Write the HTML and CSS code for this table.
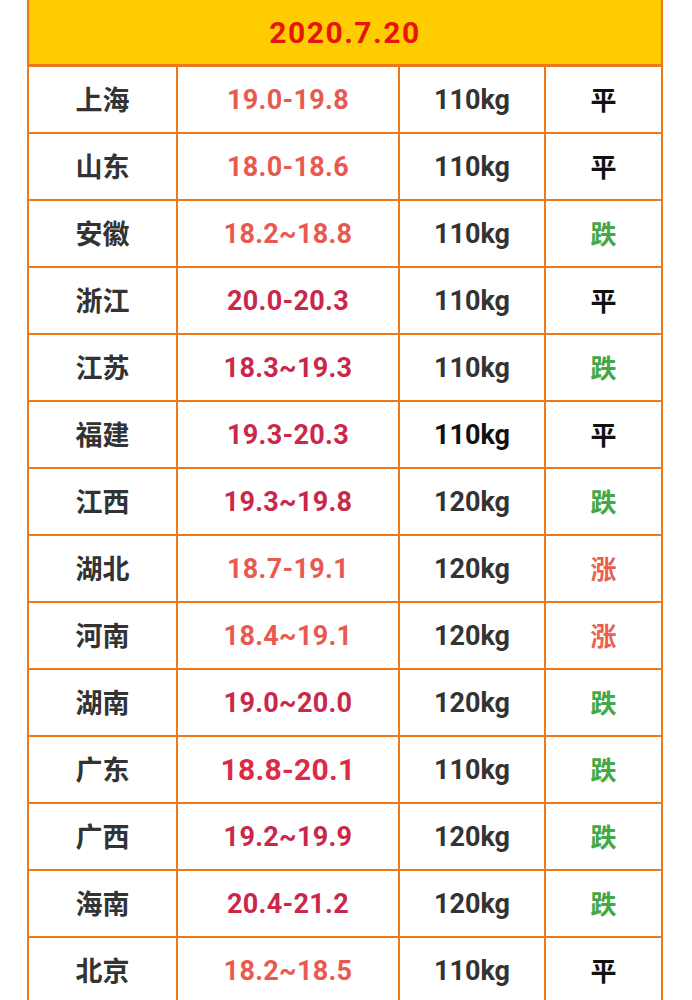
FILE: index.html
```html
<!DOCTYPE html>
<html lang="zh-CN">
<head>
<meta charset="utf-8">
<title>2020.7.20 生猪价格</title>
<link rel="stylesheet" href="styles.css">
</head>
<body>
<div class="price-table">
  <div class="head">2020.7.20</div>

  <div class="cell region">上海</div><div class="cell price coral">19.0-19.8</div><div class="cell weight">110kg</div><div class="cell trend flat">平</div>
  <div class="cell region">山东</div><div class="cell price coral">18.0-18.6</div><div class="cell weight">110kg</div><div class="cell trend flat">平</div>
  <div class="cell region">安徽</div><div class="cell price coral">18.2~18.8</div><div class="cell weight">110kg</div><div class="cell trend down">跌</div>
  <div class="cell region">浙江</div><div class="cell price crimson">20.0-20.3</div><div class="cell weight">110kg</div><div class="cell trend flat">平</div>
  <div class="cell region">江苏</div><div class="cell price crimson">18.3~19.3</div><div class="cell weight">110kg</div><div class="cell trend down">跌</div>
  <div class="cell region">福建</div><div class="cell price crimson">19.3-20.3</div><div class="cell weight dark">110kg</div><div class="cell trend flat">平</div>
  <div class="cell region">江西</div><div class="cell price crimson">19.3~19.8</div><div class="cell weight">120kg</div><div class="cell trend down">跌</div>
  <div class="cell region">湖北</div><div class="cell price coral">18.7-19.1</div><div class="cell weight">120kg</div><div class="cell trend up">涨</div>
  <div class="cell region">河南</div><div class="cell price coral">18.4~19.1</div><div class="cell weight">120kg</div><div class="cell trend up">涨</div>
  <div class="cell region">湖南</div><div class="cell price crimson">19.0~20.0</div><div class="cell weight">120kg</div><div class="cell trend down">跌</div>
  <div class="cell region">广东</div><div class="cell price red big">18.8-20.1</div><div class="cell weight">110kg</div><div class="cell trend down">跌</div>
  <div class="cell region">广西</div><div class="cell price crimson">19.2~19.9</div><div class="cell weight">120kg</div><div class="cell trend down">跌</div>
  <div class="cell region">海南</div><div class="cell price crimson">20.4-21.2</div><div class="cell weight">120kg</div><div class="cell trend down">跌</div>
  <div class="cell region">北京</div><div class="cell price coral">18.2~18.5</div><div class="cell weight">110kg</div><div class="cell trend flat">平</div>
</div>
</body>
</html>
```
FILE: styles.css
```css
html, body {
  margin: 0;
  padding: 0;
  background: #ffffff;
  height: 1000px;
  overflow: hidden;
}

body {
  font-family: Roboto, "Noto Sans CJK SC", sans-serif;
}

.price-table {
  display: grid;
  grid-template-columns: 147px 220px 144px 115px;
  grid-auto-rows: 65px;
  gap: 2px;
  width: 632px;
  margin: 0 0 0 27px;
  padding: 0 2px 2px;
  background: #ec7a1a;
}

.head {
  grid-column: 1 / -1;
  height: 64px;
  background: #ffcc00;
  color: #e5150f;
  font-weight: 700;
  font-size: 30px;
  letter-spacing: 1.5px;
  display: flex;
  align-items: center;
  justify-content: center;
}

.cell {
  background: #ffffff;
  display: flex;
  align-items: center;
  justify-content: center;
  font-weight: 700;
}

.region {
  font-family: "Noto Sans CJK SC", sans-serif;
  font-size: 27px;
  color: #333333;
  padding-bottom: 3px;
}

.price {
  font-size: 27px;
  letter-spacing: 0.3px;
}

.price.coral { color: #e85a50; }
.price.crimson { color: #c9284a; }
.price.red { color: #dc2c44; }
.price.big { font-size: 30px; }

.weight {
  font-size: 27px;
  color: #333333;
}

.weight.dark { color: #111111; }

.trend {
  font-family: "Noto Sans CJK SC", sans-serif;
  font-size: 26px;
  padding-bottom: 3px;
}

.trend.flat { color: #111111; }
.trend.down { color: #44a844; }
.trend.up { color: #e8604f; }
```
